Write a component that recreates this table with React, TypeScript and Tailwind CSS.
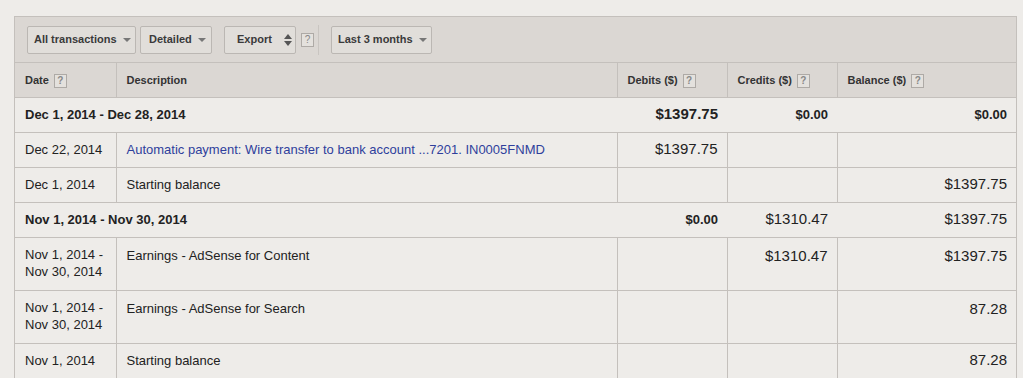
import React from "react";

const font = { fontFamily: '"Liberation Sans", Arial, sans-serif' };

function Help() {
  return (
    <span className="inline-flex items-center justify-center w-[13px] h-[14px] border border-[#aeaaa6] bg-[#e4e1dd] text-[10px] leading-none text-[#888] align-middle ml-[5px]">
      ?
    </span>
  );
}

function Caret() {
  return (
    <svg width="8" height="4" viewBox="0 0 8 4" className="ml-[6px]">
      <path d="M0 0h8L4 4z" fill="#777" />
    </svg>
  );
}

function Sort() {
  return (
    <svg width="8" height="12" viewBox="0 0 8 12" className="ml-[12px]">
      <path d="M0 5h8L4 0z" fill="#555" />
      <path d="M0 7h8L4 12z" fill="#555" />
    </svg>
  );
}

function Btn({ children, className }: { children: React.ReactNode; className?: string }) {
  return (
    <div
      className={
        "h-[28px] flex items-center border border-[#bbb7b3] rounded-[2px] bg-[#e1deda] text-[11px] font-bold text-[#3a3a3a] " +
        (className ?? "")
      }
    >
      {children}
    </div>
  );
}

type Row = {
  date?: React.ReactNode;
  desc?: React.ReactNode;
  debit?: React.ReactNode;
  credit?: React.ReactNode;
  balance?: React.ReactNode;
  group?: boolean;
  tall?: boolean;
  link?: boolean;
};

const rows: Row[] = [
  {
    group: true,
    date: "Dec 1, 2014 - Dec 28, 2014",
    debit: <span className="text-[15px] font-bold">$1397.75</span>,
    credit: <span className="text-[13px] font-bold">$0.00</span>,
    balance: <span className="text-[13px] font-bold">$0.00</span>,
  },
  {
    date: "Dec 22, 2014",
    desc: "Automatic payment: Wire transfer to bank account ...7201. IN0005FNMD",
    link: true,
    debit: "$1397.75",
  },
  { date: "Dec 1, 2014", desc: "Starting balance", balance: "$1397.75" },
  {
    group: true,
    date: "Nov 1, 2014 - Nov 30, 2014",
    debit: <span className="text-[13px] font-bold">$0.00</span>,
    credit: "$1310.47",
    balance: "$1397.75",
  },
  {
    tall: true,
    date: (
      <>
        Nov 1, 2014 -<br />
        Nov 30, 2014
      </>
    ),
    desc: "Earnings - AdSense for Content",
    credit: "$1310.47",
    balance: "$1397.75",
  },
  {
    tall: true,
    date: (
      <>
        Nov 1, 2014 -<br />
        Nov 30, 2014
      </>
    ),
    desc: "Earnings - AdSense for Search",
    balance: "87.28",
  },
  { date: "Nov 1, 2014", desc: "Starting balance", balance: "87.28" },
];

export default function App() {
  return (
    <div className="w-[1023px] h-[378px] overflow-hidden bg-[#eeece9] pt-[16px] pl-[14px] pr-[6px]" style={font}>
      <div className="border border-[#c4c0bc] border-b-0">
        {/* toolbar */}
        <div className="h-[46px] bg-[#dbd7d3] border-b border-[#c4c0bc] flex items-center pl-[12px]">
          <Btn className="w-[109px] pl-[6px]">
            All transactions
            <Caret />
          </Btn>
          <Btn className="w-[72px] ml-[4px] pl-[8px]">
            Detailed
            <Caret />
          </Btn>
          <Btn className="w-[72px] ml-[12px] pl-[12px]">
            Export
            <Sort />
          </Btn>
          <Help />
          <div className="w-px h-[30px] bg-[#c9c5c1] ml-[4px]" />
          <Btn className="w-[101px] ml-[12px] pl-[6px]">
            Last 3 months
            <Caret />
          </Btn>
        </div>

        <table className="table-fixed border-collapse w-full text-[#222]">
          <colgroup>
            <col className="w-[101px]" />
            <col className="w-[501px]" />
            <col className="w-[110px]" />
            <col className="w-[110px]" />
            <col />
          </colgroup>
          <thead>
            <tr className="h-[34px] bg-[#dbd7d3] text-[11px] font-bold text-[#333] text-left">
              <th className="pl-[10px] border-b border-[#c4c0bc]">
                Date
                <Help />
              </th>
              <th className="pl-[10px] border-l border-b border-[#c4c0bc]">Description</th>
              <th className="pl-[10px] border-l border-b border-[#c4c0bc]">
                Debits ($)
                <Help />
              </th>
              <th className="pl-[10px] border-l border-b border-[#c4c0bc]">
                Credits ($)
                <Help />
              </th>
              <th className="pl-[10px] border-l border-b border-[#c4c0bc]">
                Balance ($)
                <Help />
              </th>
            </tr>
          </thead>
          <tbody>
            {rows.map((r, i) =>
              r.group ? (
                <tr key={i} className="h-[35px] border-b border-[#c4c0bc]">
                  <td colSpan={2} className="pl-[10px] text-[13px] font-bold">
                    {r.date}
                  </td>
                  <td className="pr-[9px] text-right text-[15px]">{r.debit}</td>
                  <td className="pr-[9px] text-right text-[15px]">{r.credit}</td>
                  <td className="pr-[9px] text-right text-[15px]">{r.balance}</td>
                </tr>
              ) : (
                <tr
                  key={i}
                  className={(r.tall ? "h-[53px] " : "h-[35px] ") + "border-b border-[#c4c0bc]"}
                >
                  <td className={"pl-[10px] text-[13px] leading-[17px] " + (r.tall ? "align-top pt-[8px]" : "")}>
                    {r.date}
                  </td>
                  <td
                    className={
                      "pl-[10px] border-l border-[#c4c0bc] text-[13px] " +
                      (r.link ? "text-[#2f3f9c] " : "") +
                      (r.tall ? "align-top pt-[8px]" : "")
                    }
                  >
                    {r.desc}
                  </td>
                  <td className={"pr-[9px] text-right border-l border-[#c4c0bc] text-[15px] " + (r.tall ? "align-top pt-[7px]" : "")}>
                    {r.debit}
                  </td>
                  <td className={"pr-[9px] text-right border-l border-[#c4c0bc] text-[15px] " + (r.tall ? "align-top pt-[7px]" : "")}>
                    {r.credit}
                  </td>
                  <td className={"pr-[9px] text-right border-l border-[#c4c0bc] text-[15px] " + (r.tall ? "align-top pt-[7px]" : "")}>
                    {r.balance}
                  </td>
                </tr>
              )
            )}
          </tbody>
        </table>
      </div>
    </div>
  );
}
